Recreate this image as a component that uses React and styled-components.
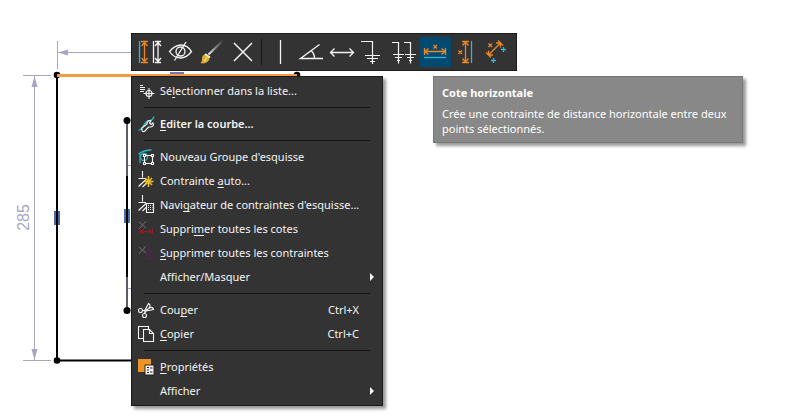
import React from "react";
import styled, { createGlobalStyle } from "styled-components";

const WHITE = "#f4f4f4";
const ORANGE = "#e8862a";
const CYAN = "#2fb4dc";
const LAVENDER = "#a9a5c6";

const GlobalStyle = createGlobalStyle`
  *, *::before, *::after { box-sizing: border-box; }
  body {
    margin: 0;
    background: #fff;
    font-family: "Noto Sans", "Open Sans", sans-serif;
    font-size: 11px;
  }
`;

const Workspace = styled.main`
  position: relative;
  min-height: 100vh;
  overflow: hidden;
`;

const Sketch = styled.svg`
  position: absolute;
  top: 0;
  left: 0;
  overflow: visible;
`;

const Popups = styled.div`
  position: relative;
  display: flex;
  flex-direction: column;
  align-items: flex-start;
  gap: 5px;
  padding: 33px 16px 14px 131px;
`;

const PopupRow = styled.div`
  display: flex;
  align-items: flex-start;
  gap: 50px;
  max-width: 100%;
`;

const Toolbar = styled.div`
  display: flex;
  align-items: center;
  padding: 3px 3px 3px 2px;
  background: #333;
  border: 1px solid #1c1c1e;
`;

const ToolButton = styled.button`
  display: flex;
  width: 31px;
  height: 30px;
  padding: 0;
  border: 0;
  background: ${(p) => (p.$active ? "#044a70" : "transparent")};
`;

const ToolDivider = styled.span`
  width: 1px;
  height: 26px;
  margin: 0 3px;
  background: #161616;
`;

const Menu = styled.div`
  display: flex;
  flex-direction: column;
  flex: none;
  padding: 2px 0;
  background: #333;
  border: 1px solid #1a1a1a;
  box-shadow: 3px 3px 3px rgba(0, 0, 0, 0.4);
`;

const MenuItem = styled.button`
  display: flex;
  align-items: center;
  gap: 6px;
  min-width: 250px;
  height: 24px;
  padding: 0 5px 0 6px;
  border: 0;
  background: transparent;
  color: ${WHITE};
  font: inherit;
  font-weight: ${(p) => (p.$strong ? 600 : 400)};
  text-align: left;
  white-space: nowrap;

  u {
    text-underline-offset: 2px;
    text-decoration-skip-ink: none;
  }
`;

const MenuLabel = styled.span`
  flex: 1;
  padding-bottom: 2px;
`;

const Shortcut = styled.span`
  padding: 0 18px 2px 0;
`;

const MenuDivider = styled.hr`
  height: 1px;
  margin: 4px 12px;
  border: 0;
  background: #141414;
`;

const Tooltip = styled.div`
  flex: 0 1 310px;
  min-width: 0;
  padding: 8px 8px 6px;
  background: #888;
  border: 1px solid #767676;
  box-shadow: 3px 3px 3px rgba(0, 0, 0, 0.4);
  color: #fff;
  line-height: 15px;
`;

const TooltipTitle = styled.h2`
  margin: 0 0 5px;
  font-size: 11px;
  line-height: 16px;
`;

const TooltipText = styled.p`
  margin: 0;
`;

const ToolSvg = ({ children }) => (
  <svg width="31" height="30" viewBox="0 0 31 30" fill="none" stroke={WHITE} strokeWidth="1.3">
    {children}
  </svg>
);

const SmallSvg = ({ children }) => (
  <svg width="16" height="16" viewBox="0 0 16 16" fill="none" stroke={WHITE} strokeWidth="1.1" overflow="visible">
    {children}
  </svg>
);

const tools = [
  {
    name: "Cotes",
    art: (
      <>
        <path d="M5.500 4V26" stroke={CYAN} strokeWidth="1.3" />
        <path d="M7 4.500H14M7 25.500H14M10.500 5V25M7.500 9L10.500 5.500L13.500 9M7.500 21L10.500 24.500L13.500 21" stroke={ORANGE} />
        <path d="M19.500 4V26M21 4.500H27M21 25.500H27M24 5V25M21 9L24 5.500L27 9M21 21L24 24.500L27 21" />
      </>
    ),
  },
  {
    name: "Masquer",
    art: (
      <>
        <path d="M4.500 14.500Q10 8 16 8Q22.500 8 26.500 14.500Q21.500 21 15.500 21Q9 21 4.500 14.500Z" />
        <circle cx="15.500" cy="14.500" r="4.500" />
        <path d="M9.500 23.500L21 5" />
      </>
    ),
  },
  {
    name: "Pinceau",
    art: (
      <>
        <defs>
          <linearGradient id="handle" x1="13" y1="17" x2="27" y2="4" gradientUnits="userSpaceOnUse">
            <stop stopColor="#e4e4e4" />
            <stop offset="0.45" stopColor="#8c8c8c" />
            <stop offset="1" stopColor="#3c3c3c" />
          </linearGradient>
        </defs>
        <path d="M12.500 17.500L27 3.500" stroke="url(#handle)" strokeWidth="2.200" />
        <path d="M9 17.500L13.500 19.500Q14 23.500 10.500 25.500Q7 27 4.500 26Q6.500 24 6 21.500Q6 18 9 17.500Z" fill="#d9ac38" stroke="none" />
        <path d="M9 17L14 20.500" stroke="#f6eeb4" strokeWidth="2" />
        <path d="M8 24.500L11 20.500" stroke="#f7d970" />
      </>
    ),
  },
  { name: "Supprimer", art: <path d="M7 6L25 24M25 6L7 24" strokeWidth="1.5" /> },
  { divider: true },
  { name: "Ligne verticale", art: <path d="M15.500 3V27" /> },
  { name: "Angle", art: <path d="M23.500 7.500L4.500 21.500H27M15 13.500Q18.500 16.500 18.500 21.500" strokeWidth="1.4" /> },
  { name: "Horizontal", art: <path d="M3.500 15.500H26.500M7.500 11.500L3.500 15.500L7.500 19.500M22.500 11.500L26.500 15.500L22.500 19.500" /> },
  { name: "Fixer", art: <path d="M3 4.500H14.500V27M7 18.500H22M9 21.500H20M12 24.500H17" strokeWidth="1.2" /> },
  {
    name: "Fixer les deux",
    art: <path d="M3 5.500H9.500V26.500M4 17.500H15M6 20.500H13M8 23.500H11M15 5.500H21.500V26.500M16 17.500H27M18 20.500H25M20 23.500H23" strokeWidth="1.2" />,
  },
  {
    name: "Cote horizontale",
    active: true,
    art: (
      <>
        <path d="M4 20.500H26" stroke={CYAN} />
        <path d="M4.500 11V18M25.500 11V18M5 14.500H25M8.500 11.500L5 14.500L8.500 17.500M21.500 11.500L25 14.500L21.500 17.500M13.500 8L17 11.500M17 8L13.500 11.500" stroke={ORANGE} />
      </>
    ),
  },
  {
    name: "Cote verticale",
    art: (
      <>
        <path d="M20.500 4V26" stroke={CYAN} />
        <path d="M11 4.500H18M11 25.500H18M14.500 5V25M11.500 8.500L14.500 5L17.500 8.500M11.500 21.500L14.500 25L17.500 21.500M7.500 13.500L11 17M11 13.500L7.500 17" stroke={ORANGE} />
      </>
    ),
  },
  {
    name: "Cote de distance",
    art: (
      <>
        <path d="M6.500 18L18.500 6M4 15.500L9 20.500M16 3.500L21 8.500M6.500 13.500V18H11M14 6H18.500V10.500M6.500 6.500L10 10M10 6.500L6.500 10" stroke={ORANGE} />
        <path d="M19 12.500H24M21.500 10V15M9 23.500H14M11.500 21V26" stroke={CYAN} />
      </>
    ),
  },
];

const constraintStrokes = (
  <path d="M4.500 -2V4.500M0.500 5.500H8M0.500 13.500L8 6.500M4.500 14L9 9.500" />
);

const icons = {
  list: (
    <>
      <path d="M2 2.500H5M2 4.500H7M2 6.500H7M2 8.500H6" />
      <circle cx="11" cy="10.500" r="3" />
      <path d="M11 5V16M5.500 10.500H16.500" />
    </>
  ),
  edit: (
    <>
      <path d="M0.500 14.500Q4 13 6.500 8Q9 4.500 12 4.500Q15 4 16 0.500" stroke="#2bb3bd" strokeWidth="1.300" />
      <path d="M4 12L9 8Q9 4.500 12 4.500L13 5L11.500 7L13 8.500L15 7Q16.500 10 13 11L10.500 11L7 15Q5 16.500 4 14.500Q3.500 13 4 12Z" strokeWidth="1.200" />
    </>
  ),
  group: (
    <>
      <path d="M0.500 5Q6 1 13.500 1M2 4V14" stroke="#2bb3bd" strokeWidth="1.300" />
      <circle cx="6" cy="8" r="3.500" stroke="#2bb3bd" strokeWidth="1.300" />
      <path d="M6.500 6.500H14.500V14.500H6.500Z" />
      <path d="M5.500 5.500H7.500V7.500H5.500ZM13.500 5.500H15.500V7.500H13.500ZM5.500 13.500H7.500V15.500H5.500ZM13.500 13.500H15.500V15.500H13.500Z" fill="#333" />
    </>
  ),
  auto: (
    <>
      {constraintStrokes}
      <path d="M10.500 3V14M5.500 8.500H15.500M7 5L14 12M14 5L7 12" stroke="#e8c02e" strokeWidth="1.500" />
    </>
  ),
  navigator: (
    <>
      {constraintStrokes}
      <path d="M8.500 6.500H15.500V15.500H8.500Z" fill="#333" />
      <path d="M10 8.500H14.500M10 10.500H14.500M10 12.500H14.500" strokeDasharray="1 1" />
    </>
  ),
  dimensions: (
    <>
      <path d="M1 1L8 7M8 0L1 8" stroke="#6d6d6d" strokeWidth="1" />
      <path d="M2.500 8V13M14.500 7V13M3 10.500H14M6 8.500L3 10.500L6 12.500M11 8.500L14 10.500L11 12.500" stroke="#921c24" />
    </>
  ),
  constraints: (
    <>
      <path d="M1 2L8 8M8 1L1 9" stroke="#6d6d6d" strokeWidth="1" />
      <path d="M6 5.500H14M12 2V14M9 13.500H15M7 9H12" stroke="#59205a" />
    </>
  ),
  cut: (
    <>
      <circle cx="2.500" cy="8.500" r="2" />
      <circle cx="6.500" cy="13.500" r="2" />
      <path d="M4.500 8.500L8 9L15.500 7.500Q15 5 12.500 5.500L8 8M6.500 11.500L7 8L10.500 1.500Q13 3 11.500 5.500L8 9Z" />
    </>
  ),
  copy: (
    <>
      <path d="M0.500 0.500H10.500V12.500H0.500Z" />
      <path d="M5.500 3.500H11.500L15.500 7.500V15.500H5.500Z" fill="#333" />
      <path d="M11.500 3.500V7.500H15.500" />
    </>
  ),
  properties: (
    <>
      <path d="M0 0H13V13H0Z" fill="#ee9427" stroke="none" />
      <path d="M7 6H16V16H7Z" fill={WHITE} stroke="#222" strokeWidth="1" />
      <path d="M9 8.500H11M9 11H11M9 13.500H11M12 9H14.500M12 13H14.500" stroke="#222" />
    </>
  ),
};

const menu = [
  { icon: "list", label: <>Sé<u>l</u>ectionner dans la liste...</> },
  { divider: true },
  { icon: "edit", strong: true, label: <><u>E</u>diter la courbe...</> },
  { divider: true },
  { icon: "group", label: "Nouveau Groupe d'esquisse" },
  { icon: "auto", label: <>Contrainte <u>a</u>uto...</> },
  { icon: "navigator", label: <>Navi<u>g</u>ateur de contraintes d'esquisse...</> },
  { icon: "dimensions", label: <>Suppri<u>m</u>er toutes les cotes</> },
  { icon: "constraints", label: <><u>S</u>upprimer toutes les contraintes</> },
  { label: "Afficher/Masquer", submenu: true },
  { divider: true },
  { icon: "cut", label: <>Cou<u>p</u>er</>, shortcut: "Ctrl+X" },
  { icon: "copy", label: <><u>C</u>opier</>, shortcut: "Ctrl+C" },
  { divider: true },
  { icon: "properties", label: <><u>P</u>ropriétés</> },
  { label: "Afficher", submenu: true },
];

function SketchDrawing() {
  return (
    <Sketch width="320" height="420" viewBox="0 0 320 420" fill="none">
      <g stroke={LAVENDER}>
        <path d="M57.500 41V69M58 52.500H140M23 75.500H51M23 360.500H51M34.500 76V360" />
        <path d="M128 165.500H133M128 288.500H133" />
      </g>
      <path d="M58 52.500L68 49.500V55.500ZM34.500 76L31.500 87H37.500ZM34.500 360L31.500 349H37.500Z" fill={LAVENDER} />
      <path d="M54 211H60V225H54ZM124 209H130V223H124Z" fill="#4a68a8" />
      <path d="M170 72H184V74H170Z" fill="#7772b2" />
      <path d="M57 75V360.500H140" stroke="#000" strokeWidth="2" />
      <path d="M127 120V311" stroke="#5e5a6c" strokeWidth="2" />
      <path d="M127 176V277" stroke="#000" strokeWidth="2" />
      <g fill="#000">
        <circle cx="57" cy="75" r="3.300" />
        <circle cx="297" cy="75" r="3.300" />
        <circle cx="57" cy="360.500" r="3.300" />
        <circle cx="127" cy="120.500" r="3.500" />
        <circle cx="127" cy="310.500" r="3.500" />
      </g>
      <path d="M57 75.500H297" stroke="#f39a45" strokeWidth="3" />
      <text
        transform="translate(29 217.500) rotate(-90)"
        textAnchor="middle"
        fill={LAVENDER}
        fontFamily="Liberation Sans, sans-serif"
        fontSize="16"
      >
        285
      </text>
    </Sketch>
  );
}

export default function App() {
  return (
    <Workspace>
      <GlobalStyle />
      <SketchDrawing />
      <Popups>
        <Toolbar role="toolbar">
          {tools.map((tool, i) =>
            tool.divider ? (
              <ToolDivider key={i} />
            ) : (
              <ToolButton key={i} type="button" aria-label={tool.name} $active={tool.active}>
                <ToolSvg>{tool.art}</ToolSvg>
              </ToolButton>
            )
          )}
        </Toolbar>
        <PopupRow>
          <Menu role="menu">
            {menu.map((item, i) =>
              item.divider ? (
                <MenuDivider key={i} />
              ) : (
                <MenuItem key={i} type="button" role="menuitem" $strong={item.strong}>
                  <SmallSvg>{icons[item.icon]}</SmallSvg>
                  <MenuLabel>{item.label}</MenuLabel>
                  {item.shortcut && <Shortcut>{item.shortcut}</Shortcut>}
                  {item.submenu && (
                    <svg width="12" height="8" viewBox="0 0 12 8">
                      <path d="M5 0L9 4L5 8Z" fill={WHITE} />
                    </svg>
                  )}
                </MenuItem>
              )
            )}
          </Menu>
          <Tooltip role="tooltip">
            <TooltipTitle>Cote horizontale</TooltipTitle>
            <TooltipText>
              Crée une contrainte de distance horizontale entre deux points sélectionnés.
            </TooltipText>
          </Tooltip>
        </PopupRow>
      </Popups>
    </Workspace>
  );
}
